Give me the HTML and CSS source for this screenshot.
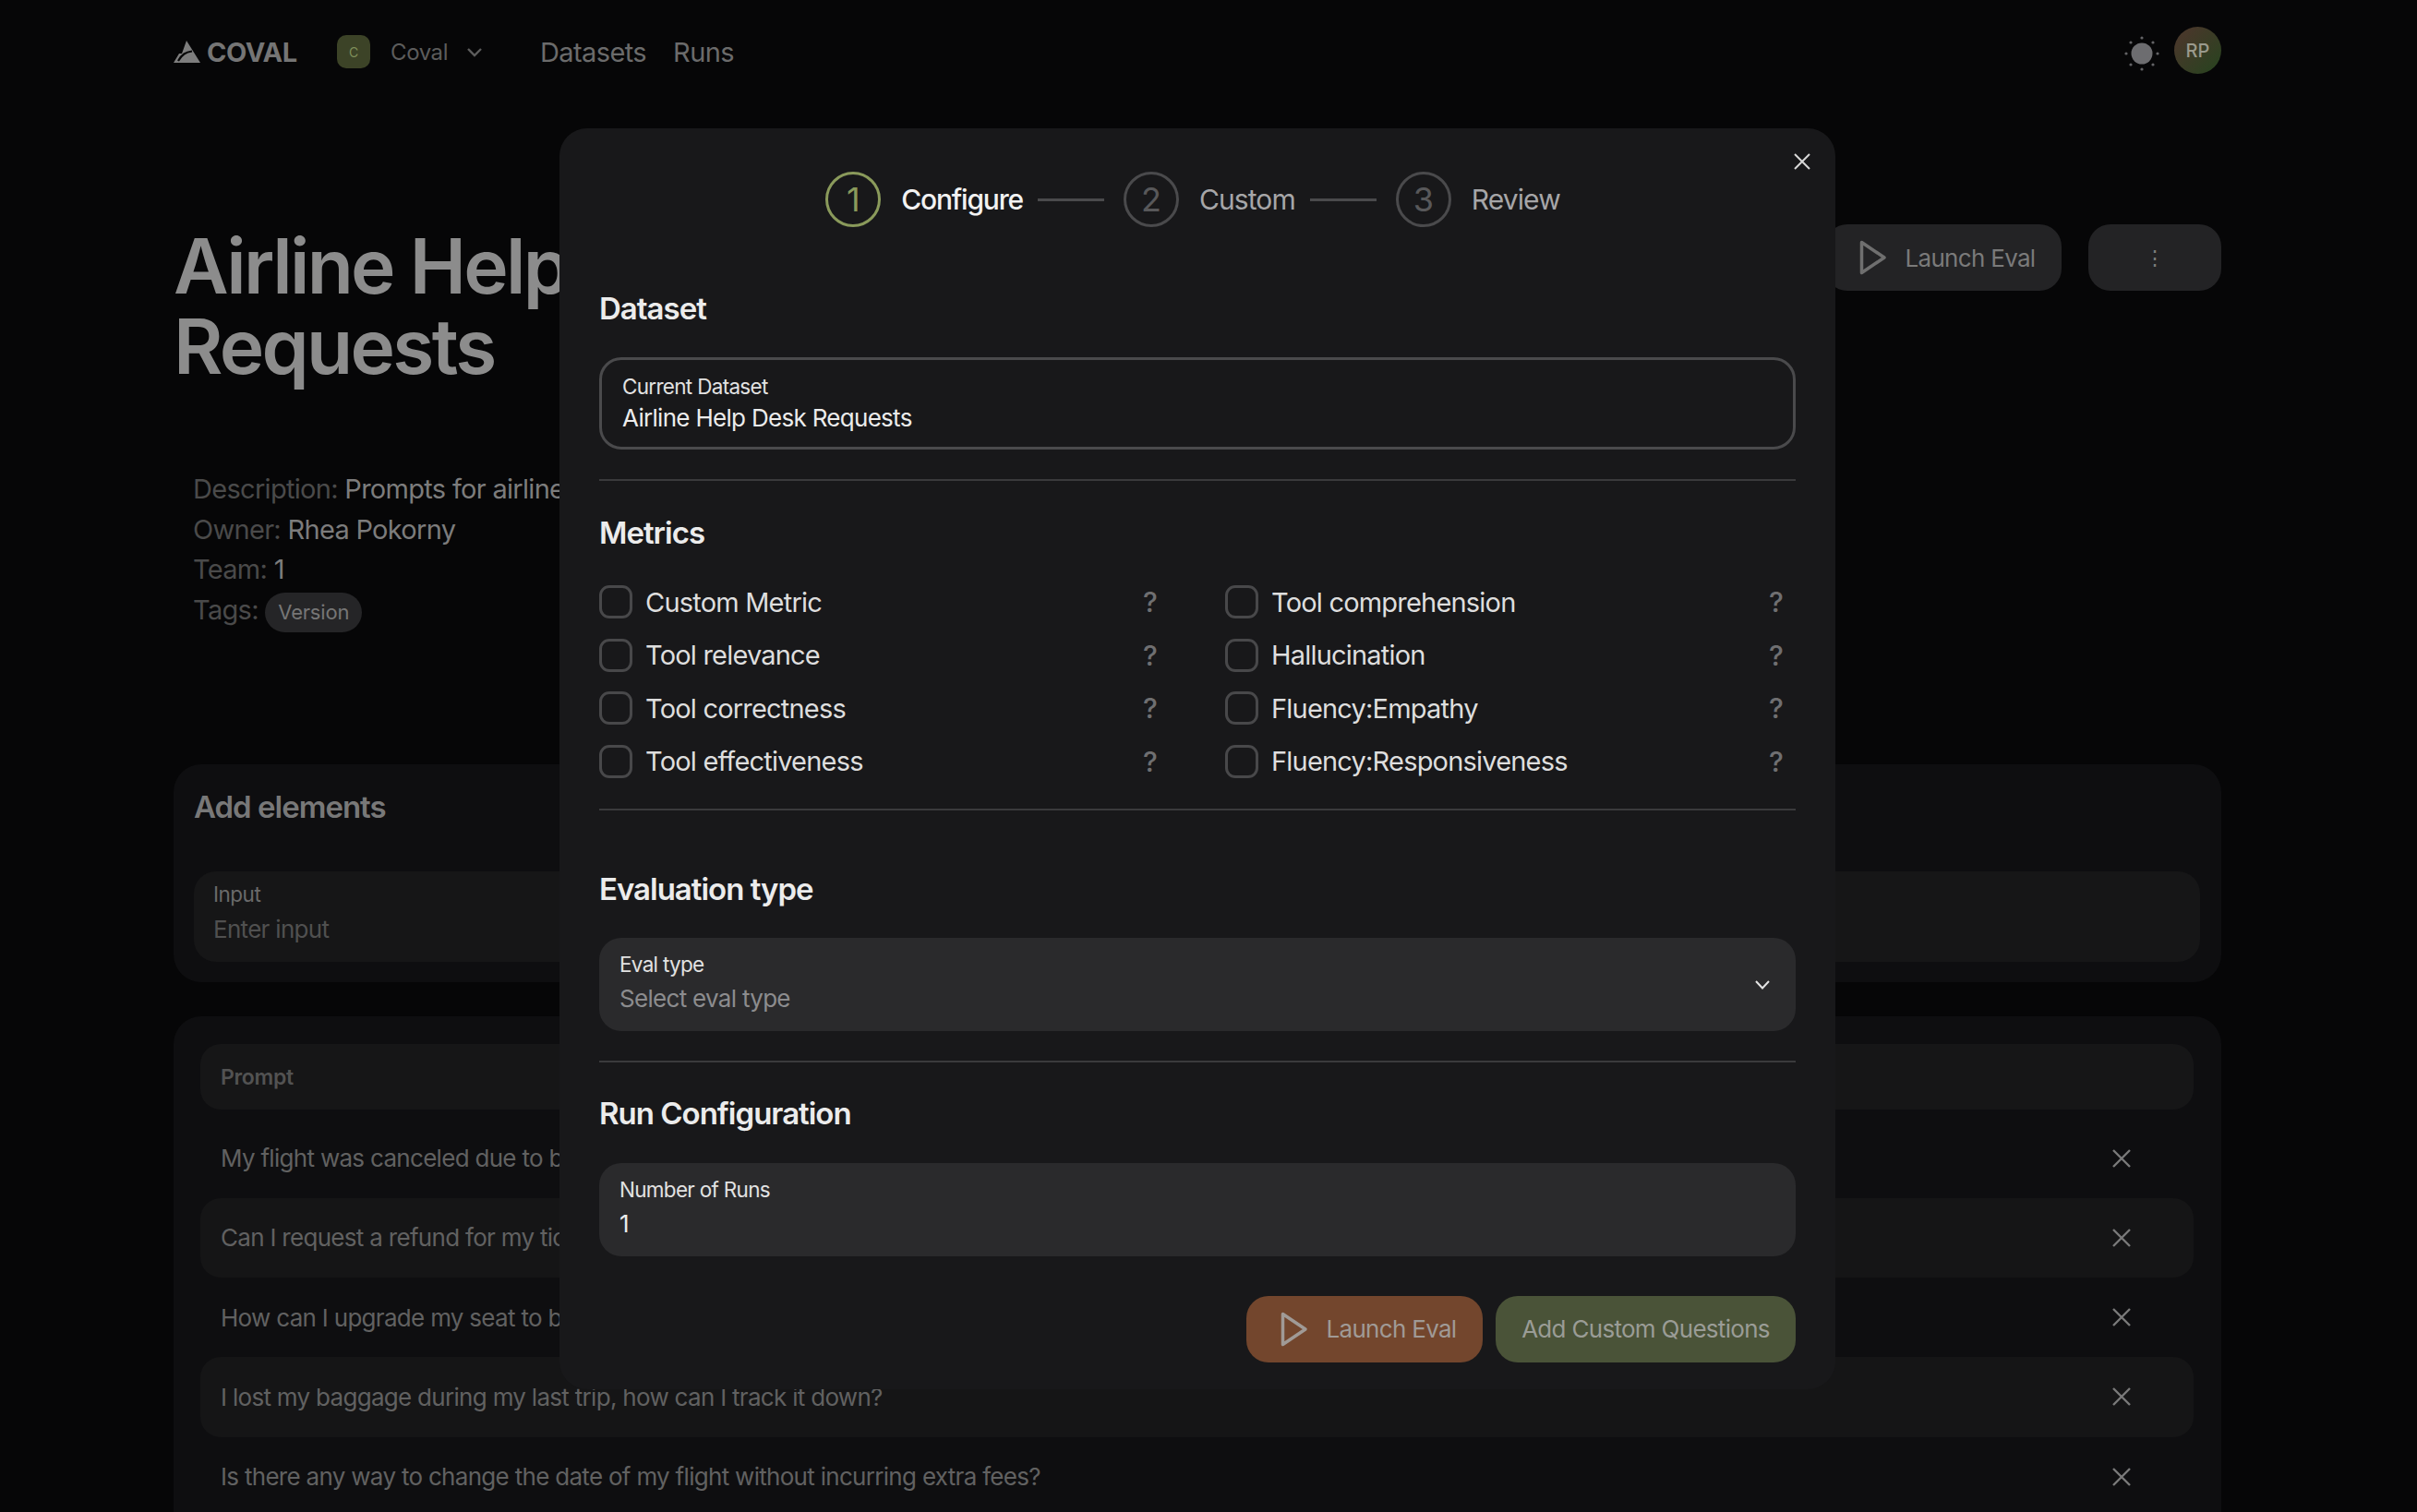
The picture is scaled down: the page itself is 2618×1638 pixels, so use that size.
FILE: index.html
```html
<!DOCTYPE html>
<html lang="en">
<head>
  <meta charset="UTF-8" />
  <meta name="viewport" content="width=device-width, initial-scale=1.0"/>
  <title>Airline Help Desk Requests</title>
  <link rel="stylesheet" href="styles.css">
</head>
<body>

<div class="page">
  <header class="nav">
    <div class="nav-left">
      <div class="logo">
        <svg class="logo-mark" viewBox="0 0 29 24" width="29" height="24">
          <path d="M14 0 L29 24 L0 24 L6 14 L9 14 Z" fill="#7d7d7d"/>
          <path d="M5 22 C9 15 13 12.500 20 11.500" fill="none" stroke="#060607" stroke-width="2.2"/>
        </svg>
        <span>COVAL</span>
      </div>
      <div class="team">
        <span class="team-badge">C</span>
        <span class="team-name">Coval</span>
        <svg class="team-chevron" viewBox="0 0 18 11" width="18" height="11">
          <path d="M2 2 L9 9 L16 2" fill="none" stroke="#5c5c5c" stroke-width="2.4"/>
        </svg>
      </div>
      <a class="nav-link">Datasets</a>
      <a class="nav-link">Runs</a>
    </div>
    <div class="nav-right">
      <svg class="sun" viewBox="0 0 38 38" width="38" height="38">
        <circle cx="19" cy="19" r="11.5" fill="#6d6d70"/>
        <g fill="#636366">
          <circle cx="19" cy="2" r="1.6"/><circle cx="19" cy="36" r="1.6"/>
          <circle cx="2" cy="19" r="1.6"/><circle cx="36" cy="19" r="1.6"/>
          <circle cx="7" cy="7" r="1.6"/><circle cx="31" cy="7" r="1.6"/>
          <circle cx="7" cy="31" r="1.6"/><circle cx="31" cy="31" r="1.6"/>
        </g>
      </svg>
      <div class="avatar">RP</div>
    </div>
  </header>

  <section class="title-row">
    <h1 class="page-title">Airline Help Desk<br>Requests</h1>
    <div class="title-actions">
      <button class="btn btn-dark">
        <svg class="play" viewBox="0 0 30 38" width="30" height="38">
          <path d="M2.500 2.500 L27 19 L2.500 35.500 Z" fill="none" stroke="#6f6f6f" stroke-width="3.500" stroke-linejoin="round"/>
        </svg>
        Launch Eval
      </button>
      <button class="btn btn-more">&#8942;</button>
    </div>
  </section>

  <section class="meta">
    <div class="meta-line"><span class="meta-key">Description:</span> Prompts for airline help desk requests</div>
    <div class="meta-line"><span class="meta-key">Owner:</span> Rhea Pokorny</div>
    <div class="meta-line"><span class="meta-key">Team:</span> 1</div>
    <div class="meta-line"><span class="meta-key">Tags:</span> <span class="tag">Version</span></div>
  </section>

  <section class="card add-card">
    <h3 class="card-title">Add elements</h3>
    <div class="back-input">
      <div class="back-label">Input</div>
      <div class="back-placeholder">Enter input</div>
    </div>
  </section>

  <section class="card prompt-card">
    <div class="prompt-head">Prompt</div>
    <div class="prompt-list">
      <div class="prompt-row">
        <span>My flight was canceled due to bad weather, what are my options?</span>
        <svg class="row-x" viewBox="0 0 20 20" width="20" height="20"><path d="M1 1 L19 19 M19 1 L1 19" stroke="#7a7a7a" stroke-width="2.400"/></svg>
      </div>
      <div class="prompt-row">
        <span>Can I request a refund for my ticket if I miss my flight?</span>
        <svg class="row-x" viewBox="0 0 20 20" width="20" height="20"><path d="M1 1 L19 19 M19 1 L1 19" stroke="#7a7a7a" stroke-width="2.400"/></svg>
      </div>
      <div class="prompt-row">
        <span>How can I upgrade my seat to business class?</span>
        <svg class="row-x" viewBox="0 0 20 20" width="20" height="20"><path d="M1 1 L19 19 M19 1 L1 19" stroke="#7a7a7a" stroke-width="2.400"/></svg>
      </div>
      <div class="prompt-row">
        <span>I lost my baggage during my last trip, how can I track it down?</span>
        <svg class="row-x" viewBox="0 0 20 20" width="20" height="20"><path d="M1 1 L19 19 M19 1 L1 19" stroke="#7a7a7a" stroke-width="2.400"/></svg>
      </div>
      <div class="prompt-row">
        <span>Is there any way to change the date of my flight without incurring extra fees?</span>
        <svg class="row-x" viewBox="0 0 20 20" width="20" height="20"><path d="M1 1 L19 19 M19 1 L1 19" stroke="#7a7a7a" stroke-width="2.400"/></svg>
      </div>
    </div>
  </section>
</div>

<div class="overlay">
  <div class="modal">
    <svg class="modal-close" viewBox="0 0 18 18" width="18" height="18"><path d="M1 1 L17 17 M17 1 L1 17" stroke="#d8d8d8" stroke-width="2"/></svg>

    <div class="stepper">
      <span class="step-num active">1</span>
      <span class="step-label active">Configure</span>
      <span class="step-line"></span>
      <span class="step-num">2</span>
      <span class="step-label">Custom</span>
      <span class="step-line"></span>
      <span class="step-num">3</span>
      <span class="step-label">Review</span>
    </div>

    <h3 class="section-title first">Dataset</h3>
    <div class="field field-outline">
      <div class="field-label">Current Dataset</div>
      <div class="field-value">Airline Help Desk Requests</div>
    </div>

    <hr class="divider">

    <h3 class="section-title metrics-title">Metrics</h3>
    <div class="metrics">
      <label class="metric"><span class="check"></span><span class="metric-name">Custom Metric</span><span class="help">?</span></label>
      <label class="metric"><span class="check"></span><span class="metric-name">Tool comprehension</span><span class="help">?</span></label>
      <label class="metric"><span class="check"></span><span class="metric-name">Tool relevance</span><span class="help">?</span></label>
      <label class="metric"><span class="check"></span><span class="metric-name">Hallucination</span><span class="help">?</span></label>
      <label class="metric"><span class="check"></span><span class="metric-name">Tool correctness</span><span class="help">?</span></label>
      <label class="metric"><span class="check"></span><span class="metric-name">Fluency:Empathy</span><span class="help">?</span></label>
      <label class="metric"><span class="check"></span><span class="metric-name">Tool effectiveness</span><span class="help">?</span></label>
      <label class="metric"><span class="check"></span><span class="metric-name">Fluency:Responsiveness</span><span class="help">?</span></label>
    </div>

    <hr class="divider">

    <h3 class="section-title wide">Evaluation type</h3>
    <div class="field field-select">
      <div>
        <div class="field-label">Eval type</div>
        <div class="field-value muted">Select eval type</div>
      </div>
      <svg class="select-chevron" viewBox="0 0 18 12" width="18" height="12"><path d="M2 2 L9 9.500 L16 2" fill="none" stroke="#e4e4e4" stroke-width="2"/></svg>
    </div>

    <hr class="divider">

    <h3 class="section-title run-title">Run Configuration</h3>
    <div class="field">
      <div class="field-label">Number of Runs</div>
      <div class="field-value">1</div>
    </div>

    <div class="modal-actions">
      <button class="btn btn-orange">
        <svg class="play" viewBox="0 0 30 38" width="30" height="38">
          <path d="M2.500 2.500 L27 19 L2.500 35.500 Z" fill="none" stroke="#a09a96" stroke-width="3.500" stroke-linejoin="round"/>
        </svg>
        Launch Eval
      </button>
      <button class="btn btn-green">Add Custom Questions</button>
    </div>
  </div>
</div>

</body>
</html>
```

FILE: styles.css
```css
* { box-sizing: border-box; }

html, body {
  height: 100%;
}

body {
  font-family: Inter, "Liberation Sans", sans-serif;
  margin: 0;
  background-color: #060607;
  color: #7a7a7a;
  overflow: hidden;
}

.page {
  width: 2218px;
  margin-left: 188px;
}

/* nav */
.nav {
  height: 112px;
  display: flex;
  align-items: center;
  justify-content: space-between;
}

.nav-left {
  display: flex;
  align-items: center;
}

.nav-right {
  display: flex;
  align-items: center;
  gap: 16px;
}

.logo {
  display: flex;
  align-items: center;
  gap: 7px;
  font-size: 29px;
  font-weight: 700;
  color: #757575;
  letter-spacing: -0.5px;
  width: 177px;
}

.team {
  display: flex;
  align-items: center;
  width: 220px;
}

.team-badge {
  width: 36px;
  height: 36px;
  border-radius: 10px;
  background: #3c4327;
  color: #7f8f5a;
  font-size: 14px;
  display: flex;
  align-items: center;
  justify-content: center;
}

.team-name {
  font-size: 24px;
  letter-spacing: -0.4px;
  color: #5c5c5c;
  margin-left: 22px;
}

.team-chevron {
  margin-left: 20px;
}

.nav-link {
  font-size: 29px;
  letter-spacing: -0.6px;
  color: #6b6b6b;
  margin-right: 29px;
}

.sun {
  display: block;
  margin-top: 3px;
}

.avatar {
  width: 51px;
  height: 51px;
  border-radius: 50%;
  background: linear-gradient(135deg, #47382a 20%, #2a4220 90%);
  color: #9a9a8c;
  font-size: 20px;
  font-weight: 500;
  display: flex;
  align-items: center;
  justify-content: center;
  margin-top: -3px;
}

/* title */
.title-row {
  display: flex;
  justify-content: space-between;
  align-items: flex-start;
  padding-top: 131px;
}

.page-title {
  margin: 2px 0 0;
  font-size: 82px;
  font-weight: 600;
  line-height: 87px;
  letter-spacing: -2.700px;
  color: #8c8c8c;
}

.title-actions {
  display: flex;
  gap: 29px;
}

.btn {
  height: 72px;
  border: none;
  border-radius: 24px;
  font-family: inherit;
  font-size: 26px;
  letter-spacing: -0.7px;
  display: flex;
  align-items: center;
  justify-content: center;
}

.btn-dark {
  width: 256px;
  background: #232325;
  color: #7a7a7a;
  gap: 20px;
  padding-left: 14px;
}

.btn-more {
  width: 144px;
  background: #232325;
  color: #7c7c7c;
  font-size: 22px;
}

.play {
  flex-shrink: 0;
}

/* meta */
.meta {
  padding-left: 21px;
  margin-top: 89px;
  font-size: 29px;
  letter-spacing: -0.7px;
  line-height: 43.6px;
  color: #7c7c7c;
}

.meta-line {
  height: 43.6px;
}

.meta-key {
  color: #4a4a4a;
}

.tag {
  display: inline-block;
  background: #252527;
  color: #767676;
  font-size: 22px;
  letter-spacing: -0.2px;
  line-height: 43px;
  height: 43px;
  padding: 0 14px;
  border-radius: 22px;
  vertical-align: top;
  margin-top: 3px;
}

/* back cards */
.card {
  background: #0e0e10;
  border-radius: 30px;
}

.add-card {
  margin-top: 146px;
  padding: 26px 23px 22px 22px;
}

.card-title {
  margin: 0;
  font-size: 33px;
  line-height: 40px;
  font-weight: 600;
  letter-spacing: -1px;
  color: #787878;
}

.back-input {
  margin-top: 50px;
  height: 98px;
  background: #161617;
  border-radius: 24px;
  padding: 13px 21px;
}

.back-label {
  font-size: 22.500px;
  letter-spacing: -0.5px;
  line-height: 24px;
  color: #6a6a6a;
}

.back-placeholder {
  margin-top: 9px;
  font-size: 26px;
  letter-spacing: -0.7px;
  line-height: 34px;
  color: #505050;
}

.prompt-card {
  margin-top: 37px;
  padding: 30px 30px 0 29px;
  height: 700px;
}

.prompt-head {
  height: 71px;
  background: #161617;
  border-radius: 22px;
  padding-left: 22px;
  display: flex;
  align-items: center;
  font-size: 23px;
  letter-spacing: -0.3px;
  font-weight: 600;
  color: #525252;
}

.prompt-list {
  margin-top: 9px;
}

.prompt-row {
  height: 86.300px;
  padding: 0 68px 0 22px;
  border-radius: 22px;
  display: flex;
  align-items: center;
  justify-content: space-between;
  font-size: 26px;
  letter-spacing: -0.7px;
  color: #616161;
}

.prompt-row:nth-child(even) {
  background: #151516;
}

/* modal */
.overlay {
  position: fixed;
  inset: 0;
  display: flex;
  justify-content: center;
  align-items: flex-start;
  padding: 139px 24px 0 0;
}

.modal {
  position: relative;
  width: 1382px;
  height: 1366px;
  background: #18181a;
  border-radius: 30px;
  padding: 47px 43px 29px;
}

.modal-close {
  position: absolute;
  top: 27px;
  right: 27px;
}

.stepper {
  display: flex;
  align-items: center;
  justify-content: center;
  height: 60px;
  padding-right: 10px;
}

.step-num {
  width: 60px;
  height: 60px;
  border-radius: 50%;
  border: 3px solid #4a4a4c;
  color: #58585a;
  font-size: 36px;
  display: flex;
  align-items: center;
  justify-content: center;
}

.step-num.active {
  border-color: #8a9a5b;
  color: #8a9a5b;
}

.step-label {
  font-size: 30px;
  letter-spacing: -0.9px;
  color: #a6a6a8;
  margin-left: 22px;
}

.step-label.active {
  color: #f2f2f2;
  font-weight: 500;
  letter-spacing: -1.200px;
}

.step-line {
  width: 72px;
  height: 3px;
  background: #4a4a4c;
  margin: 0 21px 0 16px;
}

.section-title {
  margin: 34px 0 33px;
  font-size: 33px;
  line-height: 40px;
  font-weight: 600;
  letter-spacing: -1px;
  color: #ececec;
}

.section-title.first {
  margin-top: 68px;
}

.section-title.metrics-title {
  margin-top: 36px;
}

.section-title.wide {
  margin-top: 65px;
}

.section-title.run-title {
  margin-top: 35px;
  margin-bottom: 34px;
}

.field {
  height: 101px;
  background: #2a2a2c;
  border-radius: 24px;
  padding: 17px 22px;
}

.field-outline {
  height: 100px;
  background: transparent;
  border: 3px solid #4a4a4c;
}

.field-select {
  display: flex;
  align-items: center;
  justify-content: space-between;
}

.field-select > div {
  align-self: flex-start;
}

.field-label {
  font-size: 22.500px;
  letter-spacing: -0.7px;
  line-height: 24px;
  color: #e2e2e2;
}

.field-value {
  margin-top: 8px;
  font-size: 26px;
  letter-spacing: -0.7px;
  line-height: 34px;
  color: #ececec;
}

.field-outline .field-value {
  margin-top: 5px;
}

.field-value.muted {
  color: #8c8c8e;
}

.select-chevron {
  margin: 2px 5px 0 0;
}

.divider {
  border: none;
  height: 2px;
  background: #3a3a3c;
  margin: 32px 0 0;
}

.metrics {
  margin-top: -1px;
  padding-top: 5px;
  display: grid;
  grid-template-columns: 616px 616px;
  column-gap: 62px;
  row-gap: 21.600px;
}

.metric {
  display: flex;
  align-items: center;
  height: 36px;
  font-size: 29px;
  letter-spacing: -0.8px;
  color: #dedede;
  padding-right: 12px;
}

.check {
  width: 36px;
  height: 36px;
  border: 3px solid #48484a;
  border-radius: 11px;
  flex-shrink: 0;
}

.metric-name {
  margin-left: 14px;
  flex: 1;
}

.help {
  font-size: 30px;
  font-weight: 500;
  color: #6f6f71;
}

.metrics + .divider {
  margin-top: 33px;
}

.modal-actions {
  margin-top: 43px;
  display: flex;
  justify-content: flex-end;
  gap: 14px;
}

.btn-orange {
  width: 256px;
  background: #73462d;
  color: #a09a96;
  gap: 20px;
  padding-left: 14px;
}

.btn-green {
  width: 325px;
  background: #4a5338;
  color: #9a9c96;
}
```
